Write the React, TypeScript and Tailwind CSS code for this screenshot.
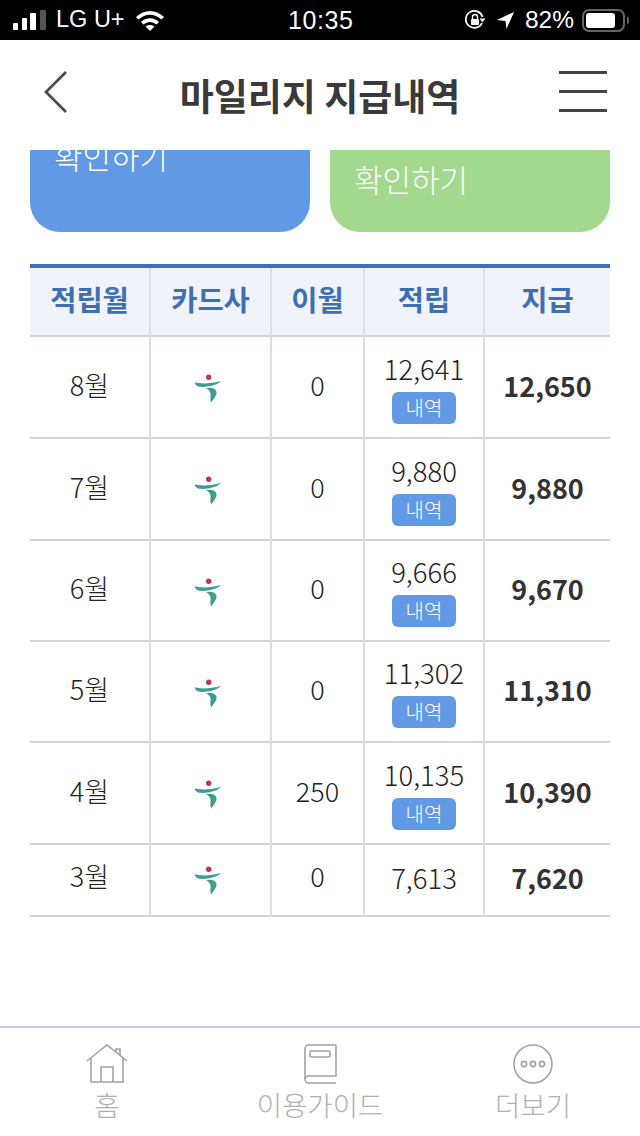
const font = { fontFamily: '"Noto Sans CJK KR", "Noto Sans", sans-serif' };
const sys = { fontFamily: '"Liberation Sans", sans-serif' };

const rows = [
  { m: "8월", e: "0", a: "12,641", d: true, t: "12,650", h: "h-[102px]", p: "pb-[4px]", b: "pb-[2px]" },
  { m: "7월", e: "0", a: "9,880", d: true, t: "9,880", h: "h-[102px]", p: "pb-[4px]", b: "pb-[2px]" },
  { m: "6월", e: "0", a: "9,666", d: true, t: "9,670", h: "h-[101px]", p: "pb-[4px]", b: "pb-[2px]" },
  { m: "5월", e: "0", a: "11,302", d: true, t: "11,310", h: "h-[101px]", p: "pb-[4px]", b: "pb-[2px]" },
  { m: "4월", e: "250", a: "10,135", d: true, t: "10,390", h: "h-[102px]", p: "pb-[4px]", b: "pb-[2px]" },
  { m: "3월", e: "0", a: "7,613", d: false, t: "7,620", h: "h-[72px]", p: "pb-[7px]", b: "pb-[4px]" },
];

function Logo() {
  return (
    <svg width="30" height="30" viewBox="0 0 30 30" className="block mr-[6px] mt-[6px]">
      <circle cx="15.7" cy="4.3" r="2.7" fill="#c8324f" />
      <path d="M1.5 9 C8 11.5 18 10.5 28 8 C24 12.5 12 15 5 13.5 Q2 12 1.5 9 Z" fill="#3f9c93" />
      <path d="M13 15.5 C18 13.5 24 16 23.5 20 C23 24 19.5 27 18.5 29.5 C16.5 26 18 23 17.5 20.5 C17 18 15.5 16.5 13 15.5 Z" fill="#3f9c93" />
    </svg>
  );
}

function StatusBar() {
  return (
    <div className="relative h-10 bg-black text-white flex items-center shrink-0">
      <div className="flex items-end ml-[13px] h-[20px] mt-[-1px]">
        <span className="w-[5px] h-[7px] rounded-[1px] bg-white" />
        <span className="ml-[4px] w-[5px] h-[12px] rounded-[1px] bg-white" />
        <span className="ml-[3px] w-[6px] h-[17px] rounded-[1px] bg-white" />
        <span className="ml-[4px] w-[6px] h-[20px] rounded-[1px] bg-[#555]" />
      </div>
      <span className="ml-[10px] text-[23.5px] leading-none" style={sys}>LG U+</span>
      <svg width="32" height="24" viewBox="0 0 32 24" className="ml-[9px]">
        <path d="M2 9 C10 1 22 1 30 9 L27.5 11.5 C20.5 5 11.5 5 4.5 11.5 Z" fill="#fff" />
        <path d="M7 14 C12 9 20 9 25 14 L22.5 16.5 C18.5 13 13.5 13 9.5 16.5 Z" fill="#fff" />
        <path d="M11.5 18.5 C14 16.5 18 16.5 20.5 18.5 L16 23 Z" fill="#fff" />
      </svg>
      <span className="absolute left-[288px] top-[7px] text-[25px] leading-[27px] tracking-[0.6px]" style={sys}>10:35</span>
      <div className="ml-auto flex items-center mr-[11px]">
        <svg width="22" height="22" viewBox="0 0 22 22" className="mr-[10px]">
          <path d="M18 14 A8.5 8.5 0 1 1 18.5 8" fill="none" stroke="#fff" strokeWidth="1.7" />
          <path d="M21.5 9.5 L15.5 9.5 L18.5 13.5 Z" fill="#fff" />
          <rect x="7" y="10" width="8" height="6" rx="1" fill="#fff" />
          <path d="M8.5 10 V8 A2.5 2.5 0 0 1 13.5 8 V10" fill="none" stroke="#fff" strokeWidth="1.4" />
        </svg>
        <svg width="19" height="19" viewBox="0 0 20 20" className="mr-[10px]">
          <path d="M19 1 L1 9.5 L10 10.5 L11 19 Z" fill="#fff" />
        </svg>
        <span className="text-[24.5px] leading-none" style={sys}>82%</span>
        <div className="ml-[8px] w-[43px] h-[23px] rounded-[7px] border-2 border-[#666] p-[2px]">
          <div className="h-full w-[29px] rounded-[3px] bg-white" />
        </div>
        <span className="ml-[2px] w-[2px] h-[7px] rounded-r-[2px] bg-[#666]" />
      </div>
    </div>
  );
}

function Header() {
  return (
    <div className="relative h-[110px] shrink-0 flex items-center justify-center bg-white">
      <svg width="26" height="44" viewBox="0 0 26 44" className="absolute left-[43px] top-[30px]">
        <path d="M23 2 L3 22 L23 42" fill="none" stroke="#4a4a4a" strokeWidth="2.7" />
      </svg>
      <span className="text-[37px] leading-[50px] font-bold text-[#3a3a3a]">마일리지 지급내역</span>
      <div className="absolute left-[559px] top-[31px] w-[48px] flex flex-col gap-[16px]">
        <span className="h-[3px] bg-[#444]" />
        <span className="h-[3px] bg-[#444]" />
        <span className="h-[3px] bg-[#444]" />
      </div>
    </div>
  );
}

function Buttons() {
  return (
    <div className="flex gap-5 px-[30px]">
      <div className="flex-1 h-[82px] rounded-b-[30px] bg-[#6299e4] overflow-hidden pl-[24px]">
        <div className="-mt-[16px] text-[31px] leading-[44px] font-light text-white">확인하기</div>
      </div>
      <div className="flex-1 h-[82px] rounded-b-[30px] bg-[#a3d88f] overflow-hidden pl-[24px]">
        <div className="mt-[7px] text-[31px] leading-[44px] font-light text-white">확인하기</div>
      </div>
    </div>
  );
}

const th = "border-r-2 last:border-r-0 border-[#dcdfe8] text-[28.5px] font-bold text-[#3f6fb3] text-center p-0 leading-[36px] pb-[6px]";
const td = "border-r-2 last:border-r-0 border-[#dddddd] text-center p-0";

function DataTable() {
  return (
    <table className="mt-8 mx-[30px] w-[580px] table-fixed border-collapse border-t-4 border-[#3b70c0]">
      <colgroup>
        <col className="w-[120px]" />
        <col className="w-[121px]" />
        <col className="w-[93px]" />
        <col className="w-[120px]" />
        <col className="w-[126px]" />
      </colgroup>
      <thead>
        <tr className="h-[70px] bg-[#f1f3fa] border-b-2 border-[#ced2e4]">
          <th className={th}>적립월</th>
          <th className={th}>카드사</th>
          <th className={th}>이월</th>
          <th className={th}>적립</th>
          <th className={th}>지급</th>
        </tr>
      </thead>
      <tbody>
        {rows.map((r) => (
          <tr key={r.m} className={`${r.h} border-b-2 border-[#d4d4d4]`}>
            <td className={`${td} ${r.p} text-[27px] font-light text-[#222]`}>{r.m}</td>
            <td className={`${td} ${r.p}`}>
              <div className="flex justify-center"><Logo /></div>
            </td>
            <td className={`${td} ${r.p} text-[27px] font-light text-[#222]`}>{r.e}</td>
            <td className={`${td} ${r.d ? "pb-[2px]" : r.p}`}>
              <div className="flex flex-col items-center gap-[5px]">
                <span className="text-[27.5px] leading-[38px] font-light text-[#222]">{r.a}</span>
                {r.d && (
                  <span className="w-[64px] h-[32px] rounded-[6px] bg-[#6299e4] text-white text-[20px] font-light leading-[31px]">내역</span>
                )}
              </div>
            </td>
            <td className={`${td} ${r.b} text-[27px] font-bold text-[#333]`}>{r.t}</td>
          </tr>
        ))}
      </tbody>
    </table>
  );
}

function HomeIcon() {
  return (
    <svg width="42" height="40" viewBox="0 0 42 40" fill="none" stroke="#a3a3a3" strokeWidth="1.6">
      <path d="M1 17 L21 1 L41 17" />
      <path d="M30 8 V5 H34 V12" />
      <path d="M5 14 V38 H37 V14" />
      <path d="M15 38 V23 H27 V38" />
    </svg>
  );
}

function BookIcon() {
  return (
    <svg width="34" height="40" viewBox="0 0 34 40" fill="none" stroke="#a3a3a3" strokeWidth="1.6">
      <path d="M33 1 H6 Q2 1 2 5 V35 Q2 39 6 39 H33" />
      <path d="M2 35 Q2 32 6 32 H33 V1" />
      <rect x="7" y="7" width="20" height="6" rx="1" />
    </svg>
  );
}

function MoreIcon() {
  return (
    <svg width="40" height="40" viewBox="0 0 40 40" fill="none" stroke="#a3a3a3" strokeWidth="1.6">
      <circle cx="20" cy="20" r="19" />
      <circle cx="11" cy="20" r="2.6" />
      <circle cx="20" cy="20" r="2.6" />
      <circle cx="29" cy="20" r="2.6" />
    </svg>
  );
}

function Tab({ icon, label }: { icon: React.ReactNode; label: string }) {
  return (
    <div className="flex-1 flex flex-col items-center">
      <div className="h-[41px] flex items-center">{icon}</div>
      <span className="text-[27.5px] leading-[40px] font-light text-[#b0b0b0]">{label}</span>
    </div>
  );
}

export default function App() {
  return (
    <div className="w-[640px] h-[1136px] flex flex-col bg-white overflow-hidden" style={font}>
      <StatusBar />
      <Header />
      <main className="flex-1 overflow-hidden">
        <Buttons />
        <DataTable />
      </main>
      <nav className="h-[110px] shrink-0 border-t-2 border-[#c6d0e2] bg-white flex pt-[15px]">
        <div className="w-[214px] flex"><Tab icon={<HomeIcon />} label="홈" /></div>
        <div className="w-[212px] flex"><Tab icon={<BookIcon />} label="이용가이드" /></div>
        <div className="w-[214px] flex"><Tab icon={<MoreIcon />} label="더보기" /></div>
      </nav>
    </div>
  );
}
